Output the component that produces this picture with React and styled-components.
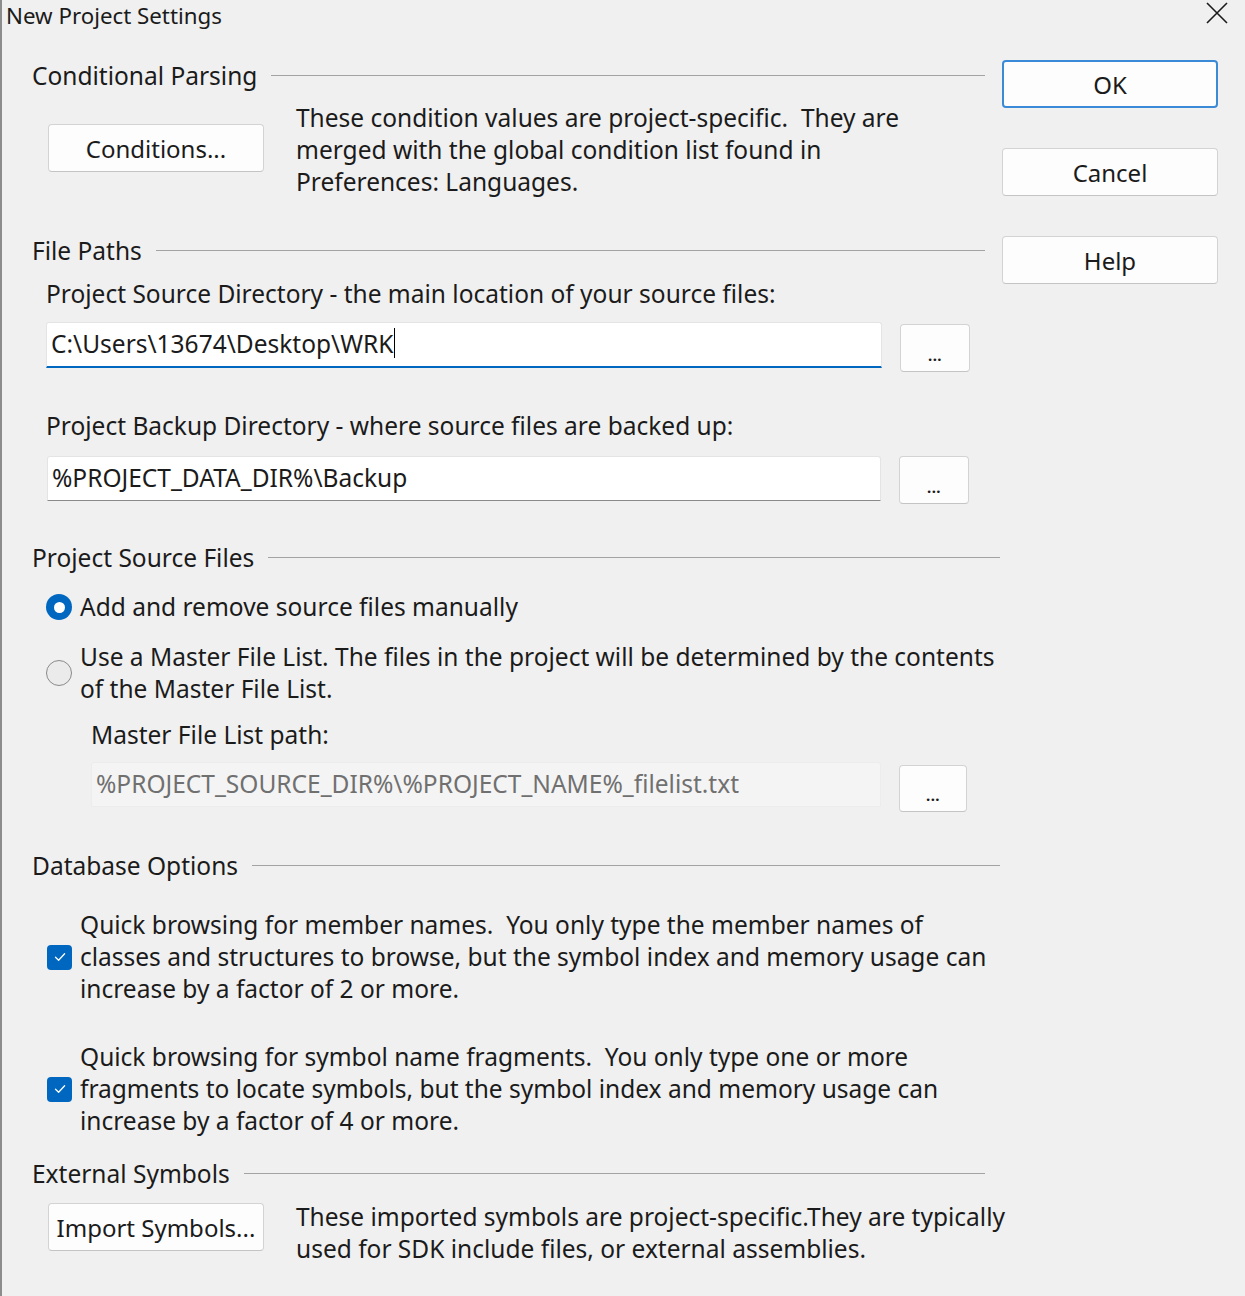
import React from 'react';
import styled, { createGlobalStyle } from 'styled-components';

const GlobalStyle = createGlobalStyle`
    html, body {
        margin: 0;
        padding: 0;
        background: #f0f0f0;
    }
    body {
        font-family: "Noto Sans", "Open Sans", sans-serif;
        color: #1b1b1b;
    }
`;

const Window = styled.div`
    width: 1245px;
    height: 1296px;
    box-sizing: border-box;
    border-left: 2px solid #8c8c8c;
    background: #f0f0f0;
    overflow: hidden;
`;

const TitleBar = styled.div`
    height: 30px;
    display: flex;
    align-items: center;
    justify-content: space-between;
    padding: 0 17px 0 4px;

    & > .title {
        font-size: 22.3px;
    }

    & > svg {
        margin-top: -4px;
    }
`;

const Body = styled.div`
    display: flex;
    padding: 29px 0 0 30px;
    gap: 2px;
`;

const LeftCol = styled.div`
    width: 968px;
    display: flex;
    flex-direction: column;
`;

const RightCol = styled.div`
    display: flex;
    flex-direction: column;
    gap: 40px;
    padding-top: 1px;
`;

const SectionHead = styled.div`
    display: flex;
    align-items: center;
    height: 32px;
    margin-top: ${p => p.top || 0}px;
    margin-right: ${p => p.inset || 0}px;
    font-size: 24.5px;

    &::after {
        content: '';
        flex: 1;
        height: 1px;
        background: #a3a3a3;
        margin-left: 14px;
    }
`;

const Text = styled.div`
    font-size: 24.5px;
    line-height: 32px;
    white-space: nowrap;
    margin-top: ${p => p.top || 0}px;
    margin-left: ${p => p.left || 0}px;
`;

const ActionRow = styled.div`
    display: flex;
    align-items: ${p => p.align || 'center'};
    gap: 32px;
    margin-top: ${p => p.top || 0}px;
    margin-left: 16px;
`;

const Button = styled.button`
    box-sizing: border-box;
    width: ${p => p.w || 216}px;
    height: ${p => p.h || 48}px;
    margin-top: ${p => p.top || 0}px;
    background: #fdfdfd;
    border: ${p => p.primary ? '2px solid #3b8ad8' : '1px solid #d3d3d3'};
    border-bottom-color: ${p => p.primary ? '#3b8ad8' : '#c4c4c4'};
    border-radius: 4px;
    font-family: inherit;
    font-size: 24px;
    color: #1b1b1b;
    padding: 0;
    flex-shrink: 0;
`;

const Dots = styled.span`
    font-size: 15px;
    font-weight: bold;
    letter-spacing: 0.5px;
    position: relative;
    top: 3px;
`;

const FieldRow = styled.div`
    display: flex;
    align-items: flex-start;
    gap: 18px;
    margin-top: ${p => p.top || 0}px;
    margin-left: ${p => p.left || 16}px;
`;

const Field = styled.div`
    box-sizing: border-box;
    width: ${p => p.w}px;
    height: ${p => p.h || 46}px;
    background: ${p => p.disabled ? '#f4f4f4' : '#ffffff'};
    border: 1px solid ${p => p.disabled ? '#ececec' : '#e4e4e4'};
    border-bottom: ${p => p.focused ? '2px solid #0067c0' : p.disabled ? '1px solid #ececec' : '1px solid #8a8a8a'};
    border-radius: 3px 3px 0 0;
    display: flex;
    align-items: center;
    padding: 0 0 3px 4px;
    font-size: 24.5px;
    color: ${p => p.disabled ? '#707070' : '#1b1b1b'};
    white-space: nowrap;

    & > .caret {
        display: inline-block;
        width: 1px;
        height: 30px;
        background: #000;
        margin-left: 1px;
    }
`;

const OptionRow = styled.div`
    display: flex;
    align-items: center;
    gap: 8px;
    margin-top: ${p => p.top || 0}px;
    margin-left: 14px;
`;

const Radio = styled.span`
    box-sizing: border-box;
    width: 26px;
    height: 26px;
    border-radius: 50%;
    flex-shrink: 0;
    background: ${p => p.checked ? '#0067c0' : 'rgba(0,0,0,0.02)'};
    border: ${p => p.checked ? 'none' : '1.5px solid #8a8a8a'};
    display: flex;
    align-items: center;
    justify-content: center;

    &::after {
        content: '';
        display: ${p => p.checked ? 'block' : 'none'};
        width: 11px;
        height: 11px;
        border-radius: 50%;
        background: #fff;
    }
`;

const Check = styled.span`
    width: 25px;
    height: 25px;
    border-radius: 4px;
    background: #0067c0;
    flex-shrink: 0;
    display: flex;
    align-items: center;
    justify-content: center;
    margin-left: 1px;
`;

const CheckMark = () => (
    <svg width="14" height="14" viewBox="0 0 14 14">
        <path d="M2.5 7.3 L5.6 10.2 L11.6 3.8" fill="none" stroke="#fff" strokeWidth="1.3" strokeLinecap="round" strokeLinejoin="round" />
    </svg>
);

const CloseIcon = () => (
    <svg width="22" height="22" viewBox="0 0 22 22">
        <path d="M1 1 L21 21 M21 1 L1 21" stroke="#1b1b1b" strokeWidth="1.6" />
    </svg>
);

const App = () => {
    return (
        <Window>
            <GlobalStyle />
            <TitleBar>
                <div className="title">New Project Settings</div>
                <CloseIcon />
            </TitleBar>

            <Body>
                <LeftCol>
                    <SectionHead inset={15}>Conditional Parsing</SectionHead>
                    <ActionRow top={11}>
                        <Button w={216} h={48} top={-4}>Conditions...</Button>
                        <Text>
                            These condition values are project-specific.&nbsp; They are<br />
                            merged with the global condition list found in<br />
                            Preferences: Languages.
                        </Text>
                    </ActionRow>

                    <SectionHead top={36} inset={15}>File Paths</SectionHead>
                    <Text top={12} left={14}>Project Source Directory - the main location of your source files:</Text>
                    <FieldRow top={12} left={14}>
                        <Field w={836} focused>C:\Users\13674\Desktop\WRK<span className="caret" /></Field>
                        <Button w={70} h={48} top={2}><Dots>...</Dots></Button>
                    </FieldRow>

                    <Text top={38} left={14}>Project Backup Directory - where source files are backed up:</Text>
                    <FieldRow top={14} left={15}>
                        <Field w={834} h={45}>%PROJECT_DATA_DIR%\Backup</Field>
                        <Button w={70} h={48}><Dots>...</Dots></Button>
                    </FieldRow>

                    <SectionHead top={37}>Project Source Files</SectionHead>
                    <OptionRow top={18}>
                        <Radio checked />
                        <Text>Add and remove source files manually</Text>
                    </OptionRow>
                    <OptionRow top={18}>
                        <Radio />
                        <Text>
                            Use a Master File List. The files in the project will be determined by the contents<br />
                            of the Master File List.
                        </Text>
                    </OptionRow>
                    <Text top={14} left={59}>Master File List path:</Text>
                    <FieldRow top={11} left={59}>
                        <Field w={790} h={45} disabled>%PROJECT_SOURCE_DIR%\%PROJECT_NAME%_filelist.txt</Field>
                        <Button w={68} h={47} top={3}><Dots>...</Dots></Button>
                    </FieldRow>

                    <SectionHead top={37}>Database Options</SectionHead>
                    <OptionRow top={28}>
                        <Check><CheckMark /></Check>
                        <Text>
                            Quick browsing for member names.&nbsp; You only type the member names of<br />
                            classes and structures to browse, but the symbol index and memory usage can<br />
                            increase by a factor of 2 or more.
                        </Text>
                    </OptionRow>
                    <OptionRow top={36}>
                        <Check><CheckMark /></Check>
                        <Text>
                            Quick browsing for symbol name fragments.&nbsp; You only type one or more<br />
                            fragments to locate symbols, but the symbol index and memory usage can<br />
                            increase by a factor of 4 or more.
                        </Text>
                    </OptionRow>

                    <SectionHead top={20} inset={15}>External Symbols</SectionHead>
                    <ActionRow top={12} align="flex-start">
                        <Button w={216} h={48} top={2}>Import Symbols...</Button>
                        <Text>
                            These imported symbols are project-specific.They are typically<br />
                            used for SDK include files, or external assemblies.
                        </Text>
                    </ActionRow>
                </LeftCol>

                <RightCol>
                    <Button primary>OK</Button>
                    <Button>Cancel</Button>
                    <Button>Help</Button>
                </RightCol>
            </Body>
        </Window>
    );
};

export default App;
